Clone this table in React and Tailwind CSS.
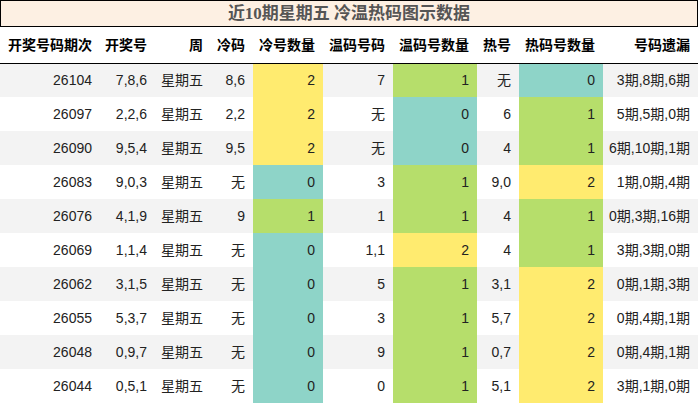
import React from "react";

const rows = [
  ["26104", "7,8,6", "8,6", 2, "7", 1, "无", 0, "3期,8期,6期"],
  ["26097", "2,2,6", "2,2", 2, "无", 0, "6", 1, "5期,5期,0期"],
  ["26090", "9,5,4", "9,5", 2, "无", 0, "4", 1, "6期,10期,1期"],
  ["26083", "9,0,3", "无", 0, "3", 1, "9,0", 2, "1期,0期,4期"],
  ["26076", "4,1,9", "9", 1, "1", 1, "4", 1, "0期,3期,16期"],
  ["26069", "1,1,4", "无", 0, "1,1", 2, "4", 1, "3期,3期,0期"],
  ["26062", "3,1,5", "无", 0, "5", 1, "3,1", 2, "0期,1期,3期"],
  ["26055", "5,3,7", "无", 0, "3", 1, "5,7", 2, "0期,4期,1期"],
  ["26048", "0,9,7", "无", 0, "9", 1, "0,7", 2, "0期,4期,1期"],
  ["26044", "0,5,1", "无", 0, "0", 1, "5,1", 2, "3期,1期,0期"],
];

const headers = ["开奖号码期次", "开奖号", "周", "冷码", "冷号数量", "温码号码", "温码号数量", "热号", "热码号数量", "号码遗漏"];
const widths = [100, 55, 56, 42, 70, 70, 84, 42, 84, 95];

// 数量 -> 颜色
function countBg(n) {
  if (n === 2) return "bg-[#ffeb6f]";
  if (n === 1) return "bg-[#b6de6b]";
  return "bg-[#8ed4c8]";
}

export default function App() {
  return (
    <div className="w-[698px] h-[404px] overflow-hidden bg-white text-[14px] text-[#222]" style={{ fontFamily: '"Liberation Sans", "Noto Sans CJK SC", sans-serif' }}>
      <div
        className="h-[27px] border border-black bg-[#fdf0e3] flex items-center justify-center text-[17px] font-bold text-[#555] leading-none"
        style={{ fontFamily: '"Liberation Serif", "Noto Sans CJK SC", serif' }}
      >
        近10期星期五 冷温热码图示数据
      </div>
      <table className="table-fixed border-collapse w-[698px]">
        <colgroup>
          {widths.map((w, i) => (
            <col key={i} style={{ width: w }} />
          ))}
        </colgroup>
        <thead>
          <tr className="h-[36px] border-b border-black">
            {headers.map((h, i) => (
              <th key={i} className="pl-0 pr-2 pt-[1px] text-right font-bold text-black whitespace-nowrap">
                {h}
              </th>
            ))}
          </tr>
        </thead>
        <tbody>
          {rows.map((r, i) => (
            <tr key={i} className={"h-[34px] whitespace-nowrap " + (i % 2 === 0 ? "bg-[#f3f3f3]" : "bg-white")}>
              <td className="pl-0 pr-2 text-right">{r[0]}</td>
              <td className="pl-0 pr-2 text-right">{r[1]}</td>
              <td className="pl-0 pr-2 text-right">星期五</td>
              <td className="pl-0 pr-2 text-right">{r[2]}</td>
              <td className={"pl-0 pr-2 text-right " + countBg(r[3])}>{r[3]}</td>
              <td className="pl-0 pr-2 text-right">{r[4]}</td>
              <td className={"pl-0 pr-2 text-right " + countBg(r[5])}>{r[5]}</td>
              <td className="pl-0 pr-2 text-right">{r[6]}</td>
              <td className={"pl-0 pr-2 text-right " + countBg(r[7])}>{r[7]}</td>
              <td className="pl-0 pr-2 text-right">{r[8]}</td>
            </tr>
          ))}
        </tbody>
      </table>
    </div>
  );
}
